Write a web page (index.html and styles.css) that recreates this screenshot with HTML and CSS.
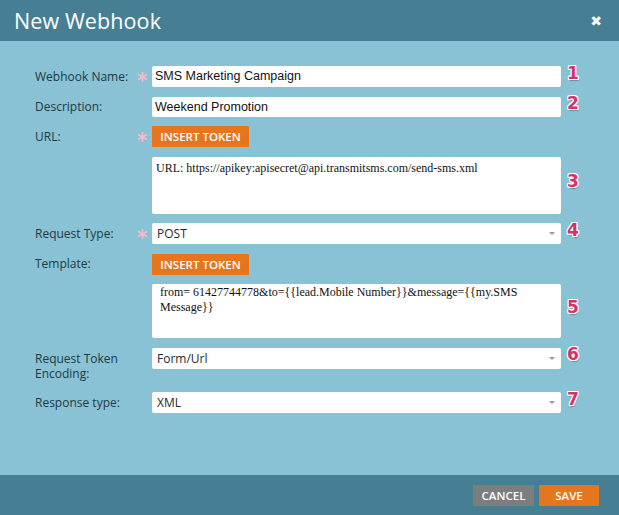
FILE: index.html
```html
<!doctype html>
<html lang="en">
  <head>
    <meta charset="UTF-8" />
    <meta name="viewport" content="width=device-width, initial-scale=1.0" />
    <title>New Webhook</title>
    <link rel="stylesheet" href="styles.css">
  </head>
  <body>
    <div class="dialog">
      <div class="dialog-header">
        <h1>New Webhook</h1>
        <span class="close">&#x2716;</span>
      </div>

      <div class="dialog-body">
        <div class="row">
          <label class="label">Webhook Name:</label>
          <span class="req"><svg width="9" height="10" viewBox="0 0 9 10"><path d="M4.5 0.5v9M0.6 2.8l7.8 4.4M0.6 7.2l7.8-4.4" /></svg></span>
          <div class="field text-input">SMS Marketing Campaign</div>
          <span class="num">1</span>
        </div>
        <div class="row">
          <label class="label">Description:</label>
          <span class="req"></span>
          <div class="field text-input short">Weekend Promotion</div>
          <span class="num">2</span>
        </div>
        <div class="row">
          <label class="label">URL:</label>
          <span class="req"><svg width="9" height="10" viewBox="0 0 9 10"><path d="M4.5 0.5v9M0.6 2.8l7.8 4.4M0.6 7.2l7.8-4.4" /></svg></span>
          <button class="token-btn">INSERT TOKEN</button>
        </div>
        <div class="row">
          <span class="label"></span>
          <span class="req"></span>
          <div class="field textarea url-area">URL: https://apikey:apisecret@api.transmitsms.com/send-sms.xml</div>
          <span class="num">3</span>
        </div>
        <div class="row">
          <label class="label">Request Type:</label>
          <span class="req"><svg width="9" height="10" viewBox="0 0 9 10"><path d="M4.5 0.5v9M0.6 2.8l7.8 4.4M0.6 7.2l7.8-4.4" /></svg></span>
          <div class="field select">POST<i class="caret"></i></div>
          <span class="num">4</span>
        </div>
        <div class="row">
          <label class="label">Template:</label>
          <span class="req"></span>
          <button class="token-btn">INSERT TOKEN</button>
        </div>
        <div class="row">
          <span class="label"></span>
          <span class="req"></span>
          <div class="field textarea template-area">from= 61427744778&amp;to={{lead.Mobile Number}}&amp;message={{my.SMS Message}}</div>
          <span class="num">5</span>
        </div>
        <div class="row row-top">
          <label class="label two-line">Request Token Encoding:</label>
          <span class="req"></span>
          <div class="field select">Form/Url<i class="caret"></i></div>
          <span class="num">6</span>
        </div>
        <div class="row row-last">
          <label class="label">Response type:</label>
          <span class="req"></span>
          <div class="field select">XML<i class="caret"></i></div>
          <span class="num">7</span>
        </div>
      </div>

      <div class="dialog-footer">
        <button class="btn btn-cancel">CANCEL</button>
        <button class="btn btn-save">SAVE</button>
      </div>
    </div>
  </body>
</html>
```

FILE: styles.css
```css
html,
body {
  margin: 0;
  padding: 0;
}
body {
  font-family: "Open Sans", "Liberation Sans", sans-serif;
  background-color: #88c2d4;
}
.dialog {
  width: 619px;
  height: 515px;
  display: flex;
  flex-direction: column;
  background-color: #88c2d4;
}
.dialog-header {
  height: 41px;
  background-color: #467f93;
  display: flex;
  align-items: center;
  justify-content: space-between;
  padding: 0 17px 0 14px;
}
.dialog-header h1 {
  margin: 0;
  font-size: 21.5px;
  font-weight: 400;
  color: #fff;
  letter-spacing: 0.1px;
}
.close {
  color: #fff;
  font-family: "DejaVu Sans", sans-serif;
  font-size: 14px;
  font-weight: bold;
  margin-top: 1px;
}
.dialog-body {
  flex: 1;
  padding: 25px 0 0 35px;
  display: flex;
  flex-direction: column;
  gap: 9.5px;
}
.row {
  display: flex;
  align-items: center;
  height: auto;
}
.row-top {
  align-items: flex-start;
}
.row-last {
  margin-top: 2px;
}
.label {
  width: 102px;
  flex: none;
  font-size: 12px;
  line-height: 16px;
  color: #233941;
}
.two-line {
  line-height: 15px;
  padding-top: 3px;
}
.req {
  width: 15px;
  flex: none;
  display: flex;
  align-items: center;
}
.req svg {
  margin-left: 1px;
  stroke: #f3bccb;
  stroke-width: 1.6;
  stroke-linecap: round;
}
.field {
  width: 409px;
  flex: none;
  box-sizing: border-box;
  background-color: #fff;
  color: #111;
  border-radius: 2px;
}
.text-input {
  height: 21px;
  line-height: 21px;
  padding: 0 3px;
  font-family: "Liberation Sans", Arial, sans-serif;
  font-size: 12.5px;
}
.text-input.short {
  height: 20px;
  line-height: 20px;
}
.textarea {
  font-family: "Liberation Serif", "Times New Roman", serif;
  font-size: 12px;
  line-height: 15px;
}
.url-area {
  height: 57px;
  padding: 4px 4px;
}
.template-area {
  height: 54px;
  padding: 1px 8px;
}
.select {
  position: relative;
  height: 21px;
  line-height: 21px;
  padding: 0 5px;
  font-size: 12px;
  color: #1e2a2e;
}
.caret {
  position: absolute;
  right: 6px;
  top: 9px;
  width: 0;
  height: 0;
  border-left: 3px solid transparent;
  border-right: 3px solid transparent;
  border-top: 3px solid #9a9a9a;
}
.num {
  height: 13px;
  margin: 0 0 7px 6px;
  font-family: "DejaVu Sans", "Open Sans", sans-serif;
  font-size: 17px;
  font-weight: bold;
  line-height: 13px;
  color: #d5326c;
  text-shadow: 1px 0 0 #fff, -1px 0 0 #fff, 0 1px 0 #fff, 0 -1px 0 #fff,
    1px 1px 0 #fff, -1px -1px 0 #fff, 1px -1px 0 #fff, -1px 1px 0 #fff,
    1px 2px 1px rgba(0, 0, 0, 0.25);
}
.token-btn {
  width: 97px;
  height: 21px;
  padding: 0;
  border: none;
  border-radius: 1px;
  background-color: #e5761e;
  color: #fff;
  font-family: "Open Sans", sans-serif;
  font-size: 11.5px;
  font-weight: 600;
}
.dialog-footer {
  height: 40px;
  background-color: #467f93;
  display: flex;
  align-items: center;
  justify-content: flex-end;
  gap: 5px;
  padding-right: 20px;
}
.btn {
  height: 21px;
  padding: 0;
  border: none;
  border-radius: 1px;
  color: #fff;
  font-family: "Open Sans", sans-serif;
  font-size: 11.5px;
  font-weight: 600;
}
.btn-cancel {
  width: 61px;
  background-color: #7b7d7e;
}
.btn-save {
  width: 60px;
  background-color: #e5761e;
}
```
